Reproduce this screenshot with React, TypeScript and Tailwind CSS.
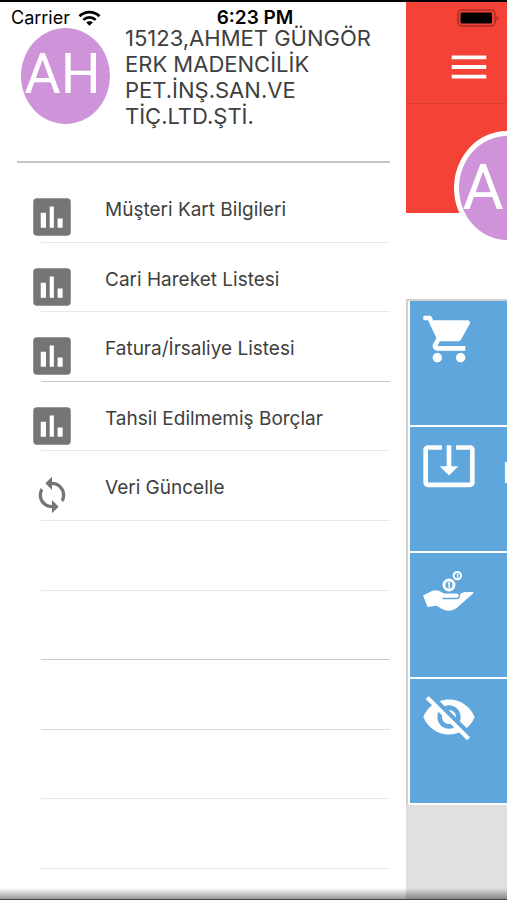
import { ReactNode } from 'react';
import {
  MdLoop,
  MdMenu,
  MdShoppingCart,
  MdSystemUpdateAlt,
  MdVisibilityOff,
} from 'react-icons/md';

const menuItems = [
  { label: 'Müşteri Kart Bilgileri', icon: 'chart' },
  { label: 'Cari Hareket Listesi', icon: 'chart' },
  { label: 'Fatura/İrsaliye Listesi', icon: 'chart' },
  { label: 'Tahsil Edilmemiş Borçlar', icon: 'chart' },
  { label: 'Veri Güncelle', icon: 'sync' },
];

// the list keeps drawing separators below the last item
const emptyRows = [5, 6, 7, 8, 9];
const darkRows = [2, 6];

function rowBorder(index: number) {
  if (darkRows.includes(index)) return 'border-[#c8c8c8]';
  return index === 7 ? 'border-[#dadada]' : 'border-[#e8e8e8]';
}

function StatusBar() {
  return (
    <div className="absolute inset-x-0 top-0 z-10 flex h-8 items-center justify-between pr-2 pl-[11px] text-black">
      <div className="flex flex-1 items-center gap-2">
        <span className="text-lg">Carrier</span>
        <svg className="h-4 w-[23px]" viewBox="0 0 23 16" aria-hidden="true">
          <path d="M1.5 6.2a14.2 14.2 0 0 1 20 0" fill="none" stroke="currentColor" strokeWidth="2.8" />
          <path d="M5.3 9.9a8.8 8.8 0 0 1 12.4 0" fill="none" stroke="currentColor" strokeWidth="2.6" />
          <path d="M11.5 15.8 8.2 12.5a4.7 4.7 0 0 1 6.6 0z" fill="currentColor" />
        </svg>
      </div>
      <span className="text-[19px] leading-6 font-semibold">6:23 PM</span>
      <div className="flex flex-1 justify-end">
        <svg className="h-[18px] w-[42px]" viewBox="0 0 42 18" aria-hidden="true">
          <rect x="1" y="1" width="37" height="16" rx="4" fill="none" stroke="#a52f26" strokeWidth="1.5" />
          <rect x="3.5" y="3.5" width="31.5" height="11" rx="1.5" fill="#000" />
          <path d="M39.5 6.5v5.5q2-1 2-2.75t-2-2.75" fill="#a52f26" />
        </svg>
      </div>
    </div>
  );
}

function ChartIcon() {
  return (
    <svg className="h-[50px] w-[50px]" viewBox="0 0 24 24" aria-hidden="true">
      <rect x="3" y="3" width="18" height="18" rx="1.8" fill="currentColor" />
      <path d="M6.6 10h2.5v7.2H6.600zM10.900 7h2v10.200h-2zM14.700 12.700h2.400v4.500h-2.400z" fill="#fff" />
    </svg>
  );
}

function DonateIcon() {
  return (
    <svg className="h-14 w-14 shrink-0" viewBox="-2 -2 56 56" fill="currentColor" aria-hidden="true">
      <g fill="none" stroke="currentColor">
        <circle cx="34.3" cy="10.6" r="3.7" strokeWidth="2" />
        <circle cx="26" cy="20" r="5" strokeWidth="3" />
      </g>
      <path d="M33.500 9.300 34.400 8.500h.8v4.200H34V9.800z" />
      <path d="M24.600 18.300 25.800 17.300h1.100v5.400h-1.500V19z" />
      <path d="M0 30.500 9.500 25.800q3.500-1.300 6.500 0l4 2.200q1 .5 2.500.5H33q2.800 0 2.800 2.100T33 32.700H19.500v1.500H33q4.200 0 4.300-3.600 0-.8-.3-1.500l4.200-2q1.400-.5 1.800.2l6.600-.5q1.500.5.400 1.700L36.500 40.500q-4.500 4.500-9.500 5.200-4.500.3-8.500-2l-4-2.500q-2-.8-4 .1L4.500 42z" />
    </svg>
  );
}

function Tile({ label, children }: { label: string; children: ReactNode }) {
  return (
    <button
      type="button"
      aria-label={label}
      className="flex h-[124px] w-full items-start bg-[#5ea6dc] pt-[10px] pl-[11px] text-white"
    >
      {children}
    </button>
  );
}

function Drawer() {
  return (
    <aside className="flex w-4/5 shrink-0 flex-col bg-white pr-4 pb-[31px] pl-[17px]">
      <div className="flex h-[161px] items-start gap-[15px] border-b-2 border-[#c4c4c4] pt-[23px] pl-1">
        <div className="mt-[3px] flex h-24 w-[89px] shrink-0 items-center justify-center rounded-[50%] bg-[#ce93d8] pr-[14px] pb-1 pl-2 font-[Roboto,sans-serif] text-[56px] text-white">
          AH
        </div>
        <p className="text-[22px] leading-[26px] text-[#404040]">
          15123,AHMET GÜNGÖR ERK MADENCİLİK PET.İNŞ.SAN.VE TİÇ.LTD.ŞTİ.
        </p>
      </div>
      <ul className="ml-6 grid flex-1 auto-rows-fr pt-[10px]">
        {menuItems.map((item, i) => (
          <li key={item.label} className={`border-b ${rowBorder(i)}`}>
            <button type="button" className="flex w-full items-start text-left">
              <span className="mt-[19px] -mb-4 -ml-[14px] flex w-[78px] shrink-0 text-[#757575]">
                {item.icon === 'chart' ? (
                  <ChartIcon />
                ) : (
                  <MdLoop className="mt-[5px] ml-[5px] h-10 w-10" />
                )}
              </span>
              <span className="pt-[25px] text-[19px] leading-6 text-[#404040]">{item.label}</span>
            </button>
          </li>
        ))}
        {emptyRows.map((i) => (
          <li key={i} className={`border-b ${rowBorder(i)}`} />
        ))}
      </ul>
    </aside>
  );
}

function HomePage() {
  return (
    <main className="flex min-w-0 flex-1 flex-col overflow-hidden bg-[#e0e0e0]">
      <header className="bg-[#f44336]">
        <div className="flex h-[102px] items-center border-b border-[#dc3d31] pt-7 pl-10">
          <button type="button" aria-label="Menü" className="text-white">
            <MdMenu className="h-[46px] w-[46px]" />
          </button>
        </div>
        <div className="h-[109px] pt-[27px] pl-12">
          <div className="relative flex h-[114px] w-[106px] items-center rounded-[50%] border-[5px] border-white bg-[#ce93d8] pl-1 font-[Roboto,sans-serif] text-[63px] text-white">
            AH
          </div>
        </div>
      </header>
      <div className="h-[86px] bg-white" />
      <div className="flex flex-col gap-[2px] border-t-2 border-l-2 border-[#d0d0d0] bg-white pb-[2px] pl-[2px]">
        <Tile label="Sepet">
          <MdShoppingCart className="h-14 w-14 shrink-0" />
        </Tile>
        <Tile label="İndir">
          <MdSystemUpdateAlt className="h-14 w-14 shrink-0" />
          <span className="ml-[26px] pt-4 text-[28px] leading-10">F</span>
        </Tile>
        <Tile label="Tahsilat">
          <DonateIcon />
        </Tile>
        <Tile label="Gizle">
          <MdVisibilityOff className="h-14 w-14 shrink-0" />
        </Tile>
      </div>
    </main>
  );
}

export default function App() {
  return (
    <div className="relative flex min-h-screen overflow-hidden border-t-2 border-black bg-white font-[Inter,sans-serif]">
      <StatusBar />
      <Drawer />
      <HomePage />
      <div className="pointer-events-none absolute inset-x-0 bottom-0 h-3 border-b border-[#444] bg-linear-to-b from-transparent to-black/40" />
    </div>
  );
}
